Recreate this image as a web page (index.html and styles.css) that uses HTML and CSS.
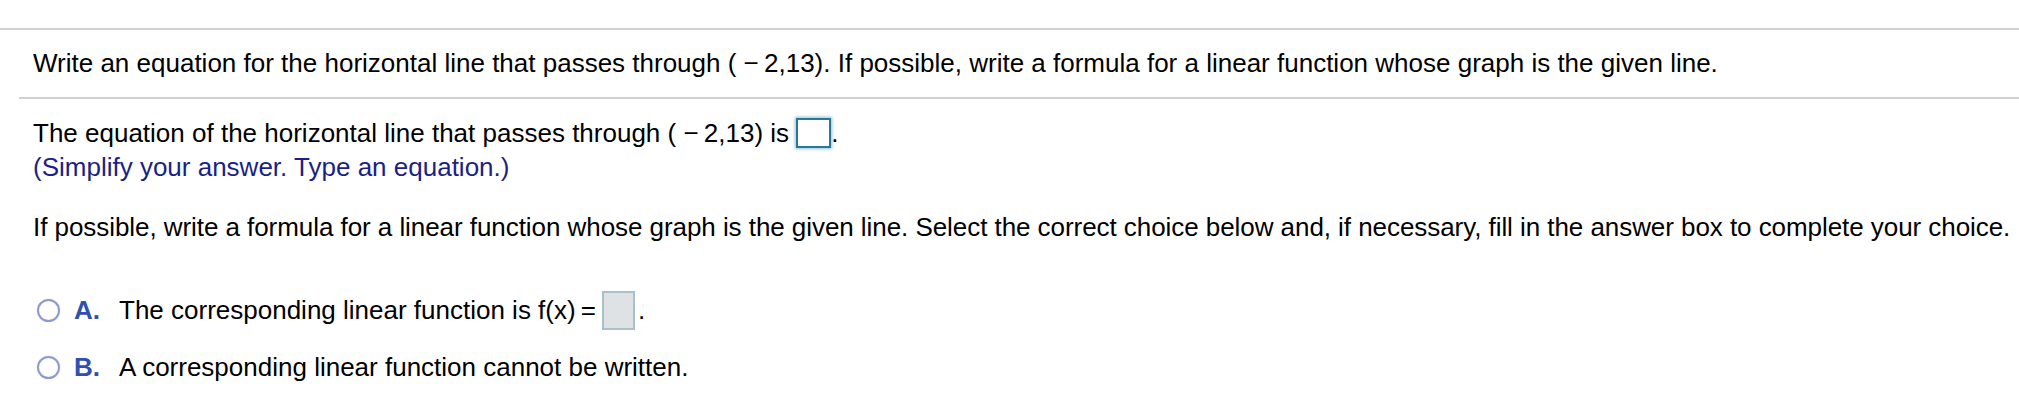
FILE: index.html
```
<!DOCTYPE html>
<html>
<head>
<meta charset="utf-8">
<link rel="stylesheet" href="styles.css">
</head>
<body>
<div class="page">
  <div class="rule-top"></div>
  <p class="question">Write an equation for the horizontal line that passes through ( −&thinsp;2,13). If possible, write a formula for a linear function whose graph is the given line.</p>
  <div class="rule-mid"></div>
  <div class="answer">
    <p class="line first">The equation of the horizontal line that passes through ( −&thinsp;2,13) is <span class="box box-active"></span>.</p>
    <p class="line hint">(Simplify your answer. Type an equation.)</p>
    <p class="line lead">If possible, write a formula for a linear function whose graph is the given line. Select the correct choice below and, if necessary, fill in the answer box to complete your choice.</p>
    <div class="choice choice-a">
      <span class="radio"></span>
      <span class="label">A.</span>
      <span class="text">The corresponding linear function is f(x)&thinsp;= <span class="box box-gray"></span>.</span>
    </div>
    <div class="choice choice-b">
      <span class="radio"></span>
      <span class="label">B.</span>
      <span class="text">A corresponding linear function cannot be written.</span>
    </div>
  </div>
</div>
</body>
</html>
```
FILE: styles.css
```
html, body {
  margin: 0;
  padding: 0;
  background: #ffffff;
}
.page {
  width: 2019px;
  height: 415px;
  overflow: hidden;
  padding-top: 28px;
  box-sizing: border-box;
  font-family: "Liberation Sans", Arial, sans-serif;
  font-size: 26px;
  color: #000;
  white-space: nowrap;
}
.rule-top {
  height: 2px;
  background: #cfd1d5;
}
.question {
  margin: 0;
  padding: 19px 0 19px 33px;
  line-height: 29px;
}
.rule-mid {
  height: 2px;
  margin-left: 19px;
  background: #cfd1d5;
}
.answer {
  padding-left: 33px;
}
.line {
  margin: 0;
  line-height: 34px;
}
.first {
  margin-top: 17px;
}
.hint {
  color: #1b1f86;
}
.lead {
  margin-top: 26px;
  letter-spacing: -0.06px;
}
.box {
  display: inline-block;
  vertical-align: middle;
  box-sizing: border-box;
}
.box-active {
  width: 35px;
  height: 30px;
  border: 2px solid #27799b;
  box-shadow: 0 0 3px 1px rgba(60, 140, 180, 0.55);
  background: #fff;
  margin-top: -4px;
}
.box-gray {
  width: 33px;
  height: 39px;
  border: 2px solid #a9c0cb;
  background: #dfe2e5;
  margin-top: -6px;
}
.choice {
  display: flex;
  align-items: center;
  height: 40px;
  margin-left: 4px;
}
.choice-a {
  margin-top: 46px;
}
.choice-b {
  margin-top: 17px;
}
.radio {
  width: 19px;
  height: 19px;
  border: 2px solid #8f9acb;
  border-radius: 50%;
  background: radial-gradient(circle, #ffffff 55%, #eef0f8 100%);
  box-shadow: 0 0 1px rgba(100, 110, 180, 0.4);
  flex: none;
}
.label {
  color: #2f4fb3;
  font-weight: bold;
  margin-left: 14px;
  width: 45px;
}
.text {
  display: inline-flex;
  align-items: center;
}
.text .box {
  margin: 0 3px 0 6px;
}
```
